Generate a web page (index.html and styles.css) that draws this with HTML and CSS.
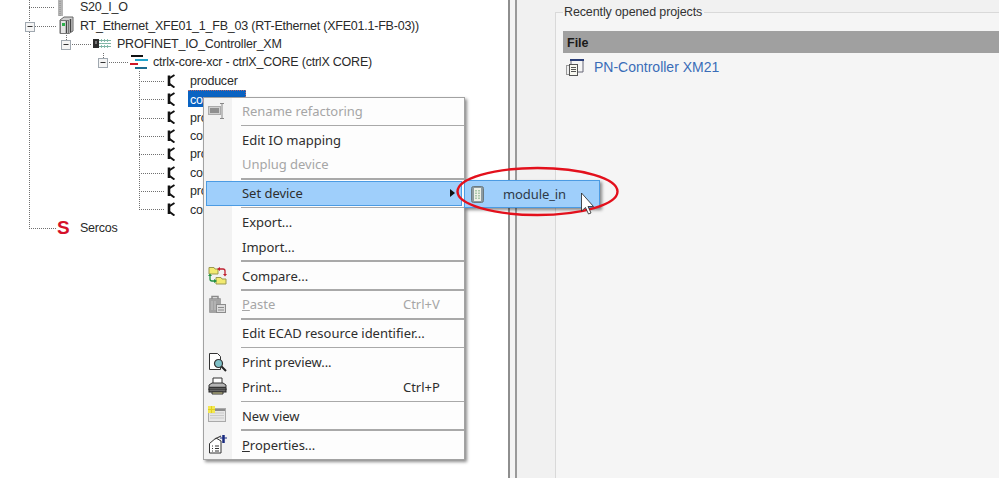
FILE: index.html
```html
<!DOCTYPE html>
<html lang="en">
<head>
<meta charset="utf-8">
<title>Set device</title>
<link rel="stylesheet" href="styles.css">
</head>
<body>
<div class="app">
  <section class="tree-pane">
    <svg class="guides" width="508" height="478" aria-hidden="true">
      <g class="dots">
        <path d="M29.500 0V228M29 7.500H55M29 26.500H56M29 228.500H56M66.500 35V44M66 44.500H91M103.500 53V62M103 62.500H128M139.500 71V209M139 81.500H165M139 99.500H165M139 118.500H165M139 136.500H165M139 154.500H165M139 173.500H165M139 191.500H165M139 209.500H165"/>
      </g>
      <g class="toggle"><rect x="25.500" y="22.500" width="9" height="9"/><path d="M27.500 26.500h5"/></g>
      <g class="toggle"><rect x="61.500" y="40.500" width="9" height="9"/><path d="M63.500 44.500h5"/></g>
      <g class="toggle"><rect x="98.500" y="58.500" width="9" height="9"/><path d="M100.500 62.500h5"/></g>
    </svg>
    <ul class="tree">
      <li class="row l1"><svg class="ic" width="17" height="17" viewBox="0 0 17 17"><rect x="1" y="0" width="5" height="17" fill="#b5b5b5"/><path d="M3 0v17" stroke="#8a8a8a" stroke-dasharray="1 1"/></svg><span class="lbl">S20_I_O</span></li>
      <li class="row l1"><svg class="ic" width="17" height="18" viewBox="0 0 17 18"><path d="M3 4 7 1h9v14l-4 2.500H3z" fill="#cfcfcf" stroke="#666"/><rect x="3.500" y="4.500" width="8" height="13" fill="#e4e4e4" stroke="#777"/><rect x="5" y="7" width="3" height="3" fill="#2cb04a"/><path d="M9.500 5v12M13.500 3v13" stroke="#444" stroke-width="1.500"/></svg><span class="lbl">RT_Ethernet_XFE01_1_FB_03 (RT-Ethernet (XFE01.1-FB-03))</span></li>
      <li class="row l2"><svg class="ic" width="18" height="11" viewBox="0 0 18 11"><rect x="0" y="1" width="6" height="9" fill="#2c2c2c"/><rect x="2" y="3" width="2" height="3" fill="#777"/><path d="M6 2.500h12M6 5.500h12M6 8.500h12" stroke="#7fb5a5"/><path d="M8.500 1v9M11.500 1v9M14.500 1v9" stroke="#8dc0b2" stroke-dasharray="1 1"/></svg><span class="lbl">PROFINET_IO_Controller_XM</span></li>
      <li class="row l3"><svg class="ic" width="18" height="14" viewBox="0 0 18 14"><path d="M1 1h12" stroke="#111" stroke-width="2"/><path d="M5 5h13" stroke="#22a4cc" stroke-width="2"/><path d="M0 9h8" stroke="#d01828" stroke-width="2"/><path d="M5 13h12" stroke="#1a6a8e" stroke-width="2"/></svg><span class="lbl">ctrlx-core-xcr - ctrlX_CORE (ctrlX CORE)</span></li>
      <li class="row l4"><svg class="ic plug" width="9" height="14" viewBox="0 0 9 14"><use href="#plug"/></svg><span class="lbl">producer</span></li>
      <li class="row l4"><svg class="ic plug" width="9" height="14" viewBox="0 0 9 14"><use href="#plug"/></svg><span class="lbl sel">consumer</span></li>
      <li class="row l4"><svg class="ic plug" width="9" height="14" viewBox="0 0 9 14"><use href="#plug"/></svg><span class="lbl">producer</span></li>
      <li class="row l4"><svg class="ic plug" width="9" height="14" viewBox="0 0 9 14"><use href="#plug"/></svg><span class="lbl">consumer</span></li>
      <li class="row l4"><svg class="ic plug" width="9" height="14" viewBox="0 0 9 14"><use href="#plug"/></svg><span class="lbl">producer</span></li>
      <li class="row l4"><svg class="ic plug" width="9" height="14" viewBox="0 0 9 14"><use href="#plug"/></svg><span class="lbl">consumer</span></li>
      <li class="row l4"><svg class="ic plug" width="9" height="14" viewBox="0 0 9 14"><use href="#plug"/></svg><span class="lbl">producer</span></li>
      <li class="row l4"><svg class="ic plug" width="9" height="14" viewBox="0 0 9 14"><use href="#plug"/></svg><span class="lbl">consumer</span></li>
      <li class="row l1"><span class="sercos">S</span><span class="lbl">Sercos</span></li>
    </ul>
  </section>

  <div class="splitter"></div>

  <section class="start-pane">
    <fieldset class="recent">
      <legend>Recently opened projects</legend>
      <div class="table-head">File</div>
      <div class="table-row">
        <svg width="18" height="18" viewBox="0 0 18 18"><path d="M5 2v5M17 2v12h-6" fill="none" stroke="#667"/><path d="M4 2h14" stroke="#2b3f78" stroke-width="2"/><rect x="0.500" y="7.500" width="4" height="9" fill="#eee" stroke="#999"/><rect x="3.500" y="6.500" width="8" height="11" fill="#f8f8f0" stroke="#555"/><path d="M5 9.500h5M5 11.500h5M5 13.500h5" stroke="#555"/></svg>
        <a class="project">PN-Controller XM21</a>
      </div>
    </fieldset>
  </section>
</div>

<svg width="0" height="0" class="defs" aria-hidden="true">
  <symbol id="plug" viewBox="0 0 9 14"><path d="M3 1.500V12" fill="none" stroke="#111" stroke-width="2.600"/><path d="M3 4.500 8.500 1M3 9.500l5.500 4" fill="none" stroke="#111" stroke-width="2"/></symbol>
</svg>

<nav class="menu">
  <div class="item disabled"><svg class="mi" width="18" height="18" viewBox="0 0 18 18"><rect x="0.500" y="4.500" width="12" height="8" fill="#cfcfcf" stroke="#aaa"/><rect x="2" y="6" width="9" height="5" fill="#8f8f8f"/><path d="M12 1.500h4M14 1.500v15M12 16.500h4" fill="none" stroke="#888"/></svg><span>Rename refactoring</span></div>
  <hr>
  <div class="item">Edit IO mapping</div>
  <div class="item disabled">Unplug device</div>
  <hr>
  <div class="item active"><span>Set device</span><i class="arrow"></i></div>
  <hr>
  <div class="item">Export...</div>
  <div class="item">Import...</div>
  <hr>
  <div class="item"><svg class="mi" width="19" height="19" viewBox="0 0 19 19"><path d="M1 1.500h5l1 1.500h3v5H1z" fill="#f2ea70" stroke="#9a9a50"/><path d="M8 11.500h5l1 1.500h4v5H8z" fill="#f2ea70" stroke="#9a9a50"/><path d="M11 3h4q2 0 2 2v3" fill="none" stroke="#c02030" stroke-width="1.300"/><path d="M12 1v4l-3-2zM15 8h4l-2 2.500z" fill="#c02030"/><path d="M2 9v4q0 2 2 2h3" fill="none" stroke="#209040" stroke-width="1.300"/><path d="M6 13v4l3-2zM0 10h4L2 7.500z" fill="#209040"/></svg><span>Compare...</span></div>
  <hr>
  <div class="item disabled"><svg class="mi" width="19" height="19" viewBox="0 0 19 19"><rect x="1" y="3" width="12" height="15" rx="1" fill="#a3a3a3"/><path d="M4 4V1.500h6V4" fill="none" stroke="#8a8a8a" stroke-width="1.500"/><path d="M4 6v9M7 6v9" stroke="#c3c3c3"/><rect x="8.500" y="9.500" width="9" height="8" fill="#dcdcdc" stroke="#8c8c8c"/><path d="M10 12.500h6M10 15h6" stroke="#8c8c8c"/></svg><span><u>P</u>aste</span><kbd>Ctrl+V</kbd></div>
  <hr>
  <div class="item">Edit ECAD resource identifier...</div>
  <hr>
  <div class="item"><svg class="mi" width="19" height="19" viewBox="0 0 19 19"><path d="M1.500.5h8l3 3v13h-11z" fill="#fff" stroke="#333"/><circle cx="10.500" cy="10.500" r="4" fill="#7fc0c8" stroke="#333" stroke-width="1.200"/><path d="m13.500 13.500 4.500 4.500" stroke="#222" stroke-width="2"/></svg><span>Print preview...</span></div>
  <div class="item"><svg class="mi" width="19" height="18" viewBox="0 0 19 18"><path d="M5 1h9v6H5z" fill="#fff" stroke="#333"/><path d="M1 8 4 6h11l3 2v5H1z" fill="#b5b5b5" stroke="#333"/><path d="M1 10.500h17" stroke="#333" stroke-width="1.500"/><rect x="1" y="12" width="17" height="3" fill="#666" stroke="#222"/><path d="M4 15h11v2H4z" fill="#dfdb9a" stroke="#333"/></svg><span>Print...</span><kbd>Ctrl+P</kbd></div>
  <hr>
  <div class="item"><svg class="mi" width="18" height="16" viewBox="0 0 18 16"><rect x="0.500" y="2.500" width="17" height="13" fill="#e6e6e6" stroke="#aaa"/><path d="M2 7h14M2 9.500h14M2 12h14" stroke="#c9c9c9"/><rect x="7" y="3" width="10" height="2" fill="#8c8c8c"/><path d="M0 0h7v7H0z" fill="#f3e752"/><path d="M3.500 0v7M0 3.500h7" stroke="#e0cf20"/></svg><span>New view</span></div>
  <hr>
  <div class="item"><svg class="mi" width="19" height="19" viewBox="0 0 19 19"><path d="M1.500 8.500 8 3l5 3v12h-11.500z" fill="#fff" stroke="#333"/><path d="M4 11h1M7 11h4M4 13.500h1M7 13.500h4M4 16h1M7 16h4" stroke="#333"/><path d="M7 4 13 1" stroke="#444" stroke-width="1.200"/><path d="M15.500 0v8" stroke="#182a80" stroke-width="2.500"/><path d="M12 3h7" stroke="#182a80"/></svg><span><u>P</u>roperties...</span></div>
</nav>

<div class="submenu">
  <svg width="13" height="19" viewBox="0 0 13 19"><rect x="0.500" y="1.500" width="12" height="16" rx="2" fill="#8c9aa0" stroke="#6b7a80"/><rect x="3" y="3" width="7" height="13" fill="#eef0e6"/><path d="M5 5v9M8 5v9" stroke="#66a070" stroke-dasharray="1.500 1"/></svg>
  <span>module_in</span>
</div>

<svg class="callout" width="999" height="478" aria-hidden="true">
  <ellipse cx="537.500" cy="191.500" rx="80" ry="23.500" fill="none" stroke="#e3101c" stroke-width="2.400"/>
  <path d="M581.500 193v18l4-3.500 3 6.500 2.500-1-3-6.500h5.500z" fill="#fff" stroke="#222" stroke-width="0.800"/>
</svg>
</body>
</html>
```

FILE: styles.css
```css
* { box-sizing: border-box; }

html, body {
  margin: 0;
  height: 100%;
  overflow: hidden;
  background: #fff;
}

.app {
  display: flex;
  width: 999px;
  height: 478px;
}

.defs { position: absolute; }

/* tree */
.tree-pane {
  position: relative;
  width: 508px;
  flex: none;
  background: #fff;
  overflow: hidden;
}

.guides {
  position: absolute;
  left: 0;
  top: 0;
}

.dots path {
  fill: none;
  stroke: #707070;
  stroke-width: 1;
  stroke-dasharray: 1 1;
}

.toggle rect {
  fill: #f4f4f4;
  stroke: #a0a8b0;
}

.toggle path {
  stroke: #333;
}

.tree {
  position: relative;
  list-style: none;
  margin: -2.2px 0 0;
  padding: 0;
  font: 12.5px/18.4px "Liberation Sans", sans-serif;
  color: #2a2a2a;
}

.row {
  display: flex;
  align-items: center;
  height: 18.4px;
  white-space: nowrap;
}

.l1 { padding-left: 57px; }
.l2 { padding-left: 93px; }
.l3 { padding-left: 130px; }
.l4 { padding-left: 166px; }

.ic { flex: none; }
.l1 .lbl, .l2 .lbl { margin-left: 6px; }
.l3 .lbl { margin-left: 5px; }
.plug + .lbl { margin-left: 15px; }

.lbl {
  padding-top: 1px;
  letter-spacing: -0.22px;
}

.l1 .sercos + .lbl { margin-left: 6px; }

.sel {
  margin-left: 13px !important;
  height: 17px;
  padding: 2px 2px 0;
  line-height: 15px;
  color: #fff;
  background: #0a63c2;
  border-top: 1px dotted #b06a70;
  border-right: 1px dotted #b06a70;
}

.sercos {
  width: 17px;
  font: bold 19px/18px "Liberation Sans", sans-serif;
  color: #d5102a;
  flex: none;
}

/* splitter */
.splitter {
  width: 9px;
  flex: none;
  background: #f4f4f4;
  border-left: 2px solid #8e8e8e;
  border-right: 2px solid #9a9a9a;
}

/* right pane */
.start-pane {
  flex: 1;
  min-width: 0;
  background: #f1f1f1;
  padding: 4px 0 0 38px;
  overflow: hidden;
}

.recent {
  margin: 0 -20px 0 0;
  padding: 11px 0 0 7px;
  height: 500px;
  border: 1px solid #d9d9d9;
  background: #f5f5f5;
  font: 12.5px "Liberation Sans", sans-serif;
  color: #333;
}

.recent legend {
  margin-left: 0;
  padding: 0 2px 0 1px;
  line-height: 16px;
  letter-spacing: -0.12px;
}

.table-head {
  height: 22px;
  padding-left: 4px;
  background: #a0a0a0;
  font-weight: bold;
  line-height: 24px;
  color: #1a1a1a;
}

.table-row {
  display: flex;
  align-items: center;
  height: 28px;
  padding-left: 3px;
  gap: 10px;
}

.project {
  font-size: 14px;
  color: #3a6db8;
}

/* context menu */
.menu {
  position: absolute;
  left: 203px;
  top: 97px;
  width: 262px;
  height: 363px;
  padding: 0.7px 0 0 2px;
  background: linear-gradient(to right, #f2f2f2 28px, #fdfdfd 28px);
  border: 1px solid #a2a2a2;
  box-shadow: 2px 2px 3px rgba(0, 0, 0, 0.45);
  font: 13px "Noto Sans", sans-serif;
  letter-spacing: -0.03px;
  color: #2e2e2e;
}

.item {
  position: relative;
  display: flex;
  align-items: center;
  height: 24.6px;
  padding-left: 36px;
  white-space: nowrap;
}

.mi {
  position: absolute;
  left: 2px;
  top: 3px;
}

.disabled { color: #a6a6a6; }

kbd {
  position: absolute;
  left: 197px;
  font: inherit;
}

hr {
  height: 1.4px;
  margin: 1.45px 0 1.45px 35px;
  border: 0;
  background: #a9a9a9;
}

.active {
  margin-right: 2px;
  background: #9fcffb;
  outline: 1px solid #4b9be3;
  outline-offset: -1px;
}

.arrow {
  position: absolute;
  left: 244px;
  top: 8px;
  border-left: 5px solid #111;
  border-top: 4px solid transparent;
  border-bottom: 4px solid transparent;
}

/* sub menu */
.submenu {
  position: absolute;
  left: 464px;
  top: 180px;
  width: 136px;
  height: 28px;
  display: flex;
  align-items: center;
  padding-left: 6px;
  gap: 19px;
  background: #9fcffb;
  border: 1px solid #4b9be3;
  box-shadow: 2px 2px 3px rgba(0, 0, 0, 0.45);
  font: 13px "Noto Sans", sans-serif;
  letter-spacing: -0.1px;
  color: #2e3a48;
}

.callout {
  position: absolute;
  left: 0;
  top: 0;
  pointer-events: none;
}
```
